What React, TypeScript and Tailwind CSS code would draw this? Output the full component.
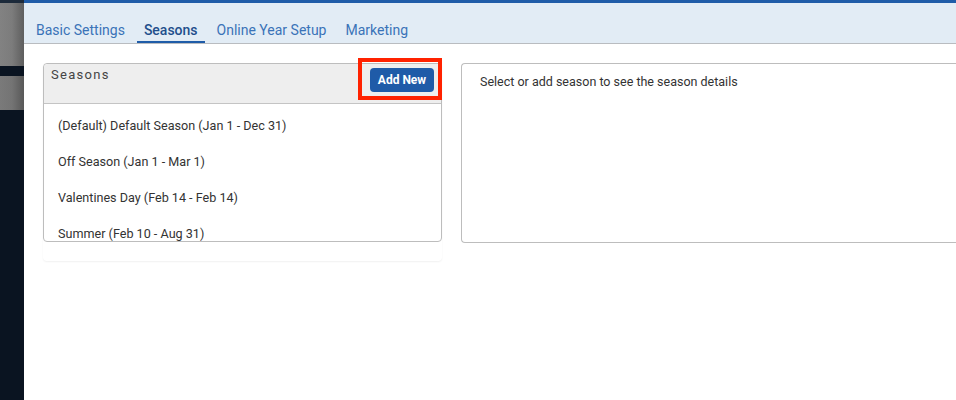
import { useState } from "react"

const tabs = ["Basic Settings", "Seasons", "Online Year Setup", "Marketing"]

const seasons = [
  "(Default) Default Season (Jan 1 - Dec 31)",
  "Off Season (Jan 1 - Mar 1)",
  "Valentines Day (Feb 14 - Feb 14)",
  "Summer (Feb 10 - Aug 31)",
]

export default function App() {
  const [active, setActive] = useState(1)

  return (
    <div className="flex h-[400px] w-[956px] overflow-hidden bg-white font-['Roboto',sans-serif]">
      {/* backdrop strip on the left */}
      <div className="flex w-[24px] shrink-0 flex-col bg-[#0a1421]">
        <div className="h-[3px] bg-[#1c2a3a]" />
        <div className="h-[63px] bg-gradient-to-r from-[#828282] via-[#7c7c7c] to-[#5e5e5e]" />
        <div className="h-[10px]" />
        <div className="h-[34px] bg-gradient-to-r from-[#7a7a7a] via-[#747474] to-[#585858]" />
      </div>

      <div className="flex min-w-0 flex-1 flex-col">
        {/* tabs */}
        <div className="h-[3px] bg-[#1f5ca8]" />
        <div className="flex h-[41px] items-end border-b border-[#b9bcc0] bg-[#e2ecf5] pl-[5px]">
          {tabs.map((t, i) => (
            <button
              key={t}
              onClick={() => setActive(i)}
              className={
                i === active
                  ? "mr-[5px] h-[34px] border-b-2 border-[#1f5ca8] px-[7px] pt-[10px] text-[14px] font-medium leading-[16px] text-[#1f4f8c]"
                  : "mr-[5px] h-[34px] border-b-2 border-transparent px-[7px] pt-[10px] text-[14px] leading-[16px] text-[#3a73b8]"
              }
            >
              {t}
            </button>
          ))}
        </div>

        <div className="flex items-start gap-[19px] pl-[19px] pt-[19px]">
          {/* seasons list */}
          <div className="relative w-[399px] shrink-0 rounded-[4px] bg-white pb-[19px] shadow-[0_1px_2px_rgba(0,0,0,0.06)]">
            <div className="flex h-[179px] flex-col rounded-[4px] border border-[#bdbdbd]">
              <div className="flex h-[40px] shrink-0 items-start justify-between rounded-t-[4px] border-b border-[#c4c4c4] bg-[#eeeeee] pl-[7px] pr-[7px]">
                <span className="pt-[1px] text-[13px] tracking-[1.3px] text-[#444]">Seasons</span>
                <button className="mt-[4px] h-[24px] w-[64px] rounded-[4px] bg-[#1f5ba8] text-[12px] font-bold text-white">
                  Add New
                </button>
              </div>
              <div className="flex-1 overflow-hidden rounded-b-[4px] pt-[4px]">
                {seasons.map((s) => (
                  <div key={s} className="h-[36px] pl-[14px] text-[12.6px] leading-[36px] text-[#333]">
                    {s}
                  </div>
                ))}
              </div>
            </div>
            {/* highlight box */}
            <div className="pointer-events-none absolute left-[315px] top-[-5px] h-[42px] w-[84px] border-[4px] border-[#ff2200]" />
          </div>

          {/* details */}
          <div className="h-[180px] flex-1 rounded-l-[4px] border border-r-0 border-[#bdbdbd] px-[18px] pt-[9px] text-[12.5px] text-[#333]">
            Select or add season to see the season details
          </div>
        </div>
      </div>
    </div>
  )
}
